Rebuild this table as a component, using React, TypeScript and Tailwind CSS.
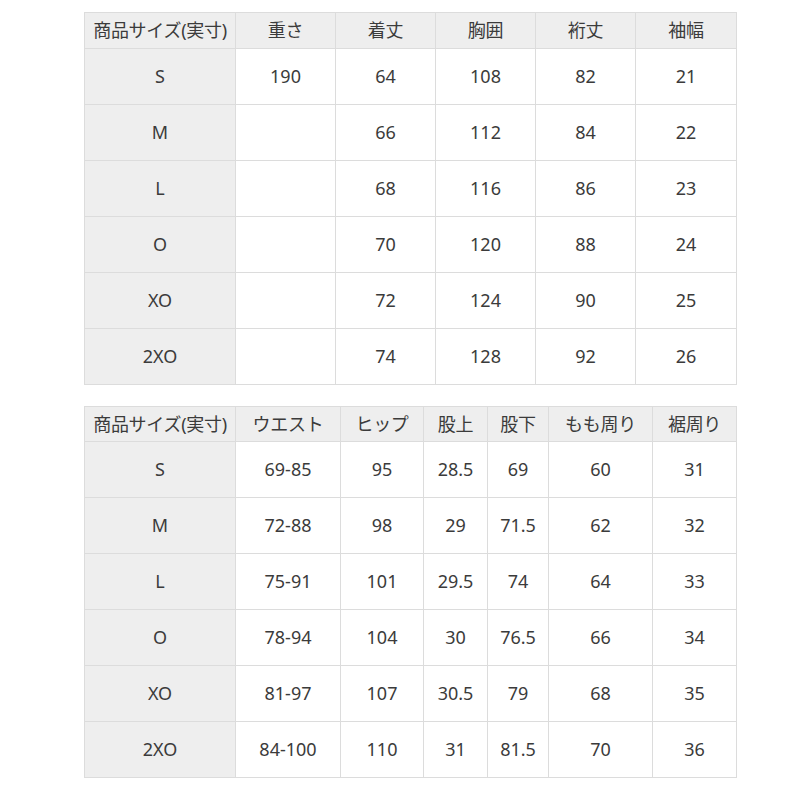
import React from 'react';

type Table = {
  headers: string[];
  widths: number[];
  rows: string[][];
  headerH: number;
};

const sizes = ['S', 'M', 'L', 'O', 'XO', '2XO'];

const tops: Table = {
  headers: ['商品サイズ(実寸)', '重さ', '着丈', '胸囲', '裄丈', '袖幅'],
  widths: [151, 100, 100, 100, 100, 101],
  headerH: 36,
  rows: [
    ['190', '64', '108', '82', '21'],
    ['', '66', '112', '84', '22'],
    ['', '68', '116', '86', '23'],
    ['', '70', '120', '88', '24'],
    ['', '72', '124', '90', '25'],
    ['', '74', '128', '92', '26'],
  ],
};

const bottoms: Table = {
  headers: ['商品サイズ(実寸)', 'ウエスト', 'ヒップ', '股上', '股下', 'もも周り', '裾周り'],
  widths: [151, 105, 83, 64, 61, 104, 84],
  headerH: 35,
  rows: [
    ['69-85', '95', '28.5', '69', '60', '31'],
    ['72-88', '98', '29', '71.5', '62', '32'],
    ['75-91', '101', '29.5', '74', '64', '33'],
    ['78-94', '104', '30', '76.5', '66', '34'],
    ['81-97', '107', '30.5', '79', '68', '35'],
    ['84-100', '110', '31', '81.5', '70', '36'],
  ],
};

const SizeTable = ({ t }: { t: Table }) => (
  <table
    className="table-fixed border-collapse border border-[#dcdcdc] text-[18px] text-[#3b3b3b]"
    style={{ width: t.widths.reduce((a, b) => a + b, 0) }}
  >
    <colgroup>
      {t.widths.map((w, i) => (
        <col key={i} style={{ width: w }} />
      ))}
    </colgroup>
    <thead>
      <tr className="bg-[#eeeeee]">
        {t.headers.map((h, i) => (
          <th
            key={i}
            className="border border-[#dcdcdc] p-0 text-center font-normal whitespace-nowrap tracking-[-0.3px]"
            style={{ height: t.headerH }}
          >
            {h}
          </th>
        ))}
      </tr>
    </thead>
    <tbody>
      {t.rows.map((row, r) => (
        <tr key={r} className="h-[56px]">
          <td className="border border-[#dcdcdc] bg-[#eeeeee] p-0 text-center">{sizes[r]}</td>
          {row.map((v, c) => (
            <td key={c} className="border border-[#dcdcdc] bg-white p-0 text-center">
              {v}
            </td>
          ))}
        </tr>
      ))}
    </tbody>
  </table>
);

export default function App() {
  return (
    <div
      className="w-[800px] h-[800px] bg-white pt-[12px] pl-[84px]"
      style={{ fontFamily: '"Noto Sans", "Noto Sans CJK JP", sans-serif' }}
    >
      <div className="flex flex-col gap-[21px]">
        <SizeTable t={tops} />
        <SizeTable t={bottoms} />
      </div>
    </div>
  );
}
